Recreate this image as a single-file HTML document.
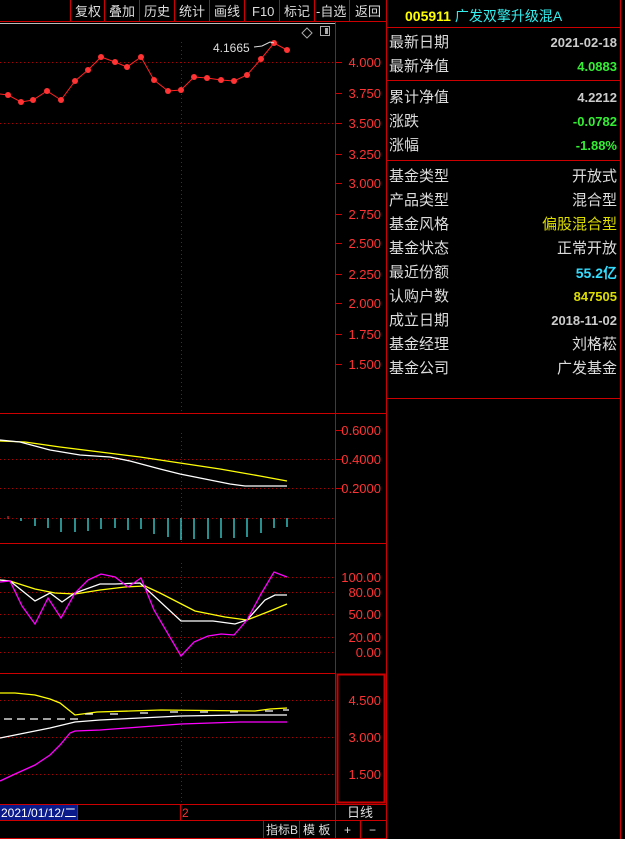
<!DOCTYPE html>
<html><head><meta charset="utf-8"><style>
body{margin:0;background:#fff;width:625px;height:849px;overflow:hidden;font-family:"Liberation Sans","Noto Sans CJK SC",sans-serif}
#w{position:absolute;left:0;top:0;width:625px;height:839px;background:#000}
.t{position:absolute;font-size:14px;white-space:nowrap}
</style></head><body><div id="w">
<svg width="625" height="839" style="position:absolute;left:0;top:0" font-family="Liberation Sans,Noto Sans CJK SC,sans-serif">
<!-- toolbar -->
<g stroke="#c00" stroke-width="1" fill="none">
<line x1="0" y1="21.5" x2="386" y2="21.5"/>
<line x1="70.5" y1="0" x2="70.5" y2="21"/><line x1="104.5" y1="0" x2="104.5" y2="21"/><line x1="139.5" y1="0" x2="139.5" y2="21"/><line x1="174.5" y1="0" x2="174.5" y2="21"/><line x1="209.5" y1="0" x2="209.5" y2="21"/><line x1="244.5" y1="0" x2="244.5" y2="21"/><line x1="279.5" y1="0" x2="279.5" y2="21"/><line x1="314.5" y1="0" x2="314.5" y2="21"/><line x1="349.5" y1="0" x2="349.5" y2="21"/>
<line x1="335.5" y1="22" x2="335.5" y2="820"/>
<line x1="386.5" y1="0" x2="386.5" y2="839"/>
<line x1="620.5" y1="0" x2="620.5" y2="839"/>
<line x1="0" y1="413.5" x2="386" y2="413.5"/>
<line x1="0" y1="543.5" x2="386" y2="543.5"/>
<line x1="0" y1="673.5" x2="335" y2="673.5"/>
<rect x="337.5" y="674.5" width="47" height="128" stroke-width="2"/>
<line x1="0" y1="804.5" x2="386" y2="804.5"/>
<line x1="0" y1="820.5" x2="386" y2="820.5"/>
<line x1="180.5" y1="804" x2="180.5" y2="820"/>
<line x1="263.5" y1="820" x2="263.5" y2="839"/><line x1="299.5" y1="820" x2="299.5" y2="839"/><line x1="335.5" y1="820" x2="335.5" y2="839"/><line x1="360.5" y1="820" x2="360.5" y2="839"/>
<line x1="0" y1="838.5" x2="386" y2="838.5"/>
<line x1="387" y1="27.5" x2="620" y2="27.5"/><line x1="387" y1="80.5" x2="620" y2="80.5"/><line x1="387" y1="160.5" x2="620" y2="160.5"/><line x1="387" y1="398.5" x2="620" y2="398.5"/>
</g>
<line x1="0" y1="23.5" x2="335" y2="23.5" stroke="#bbb"/>
<g fill="#ddd" font-size="13">
<text x="75" y="16">复权</text><text x="109" y="16">叠加</text><text x="144" y="16">历史</text><text x="179" y="16">统计</text><text x="214" y="16">画线</text><text x="252" y="16">F10</text><text x="284" y="16">标记</text><text x="316" y="16">-自选</text><text x="355" y="16">返回</text>
</g>
<!-- grid dotted -->
<g stroke="#a00" stroke-dasharray="1,3" fill="none">
<line x1="0" y1="62.5" x2="335" y2="62.5"/><line x1="0" y1="123.5" x2="335" y2="123.5"/>
<line x1="181.5" y1="42" x2="181.5" y2="413"/>
<line x1="0" y1="459.5" x2="335" y2="459.5"/><line x1="0" y1="488.5" x2="335" y2="488.5"/><line x1="0" y1="518.5" x2="335" y2="518.5"/>
<line x1="181.5" y1="433" x2="181.5" y2="543"/>
<line x1="0" y1="577.5" x2="335" y2="577.5"/><line x1="0" y1="592.5" x2="335" y2="592.5"/><line x1="0" y1="614.5" x2="335" y2="614.5"/><line x1="0" y1="637.5" x2="335" y2="637.5"/><line x1="0" y1="652.5" x2="335" y2="652.5"/>
<line x1="181.5" y1="563" x2="181.5" y2="673"/>
<line x1="0" y1="700.5" x2="335" y2="700.5"/><line x1="0" y1="737.5" x2="335" y2="737.5"/><line x1="0" y1="774.5" x2="335" y2="774.5"/>
<line x1="181.5" y1="693" x2="181.5" y2="804"/>
</g>
<!-- axis ticks/labels -->
<g stroke="#c00"><line x1="335" y1="62.5" x2="342" y2="62.5"/><line x1="335" y1="93.5" x2="342" y2="93.5"/><line x1="335" y1="123.5" x2="342" y2="123.5"/><line x1="335" y1="154.5" x2="342" y2="154.5"/><line x1="335" y1="183.5" x2="342" y2="183.5"/><line x1="335" y1="214.5" x2="342" y2="214.5"/><line x1="335" y1="243.5" x2="342" y2="243.5"/><line x1="335" y1="274.5" x2="342" y2="274.5"/><line x1="335" y1="303.5" x2="342" y2="303.5"/><line x1="335" y1="334.5" x2="342" y2="334.5"/><line x1="335" y1="364.5" x2="342" y2="364.5"/>
<line x1="335" y1="430.5" x2="342" y2="430.5"/><line x1="335" y1="459.5" x2="342" y2="459.5"/><line x1="335" y1="488.5" x2="342" y2="488.5"/></g>
<g fill="#f33" font-size="13" text-anchor="end">
<text x="381" y="67">4.000</text><text x="381" y="98">3.750</text><text x="381" y="128">3.500</text><text x="381" y="159">3.250</text><text x="381" y="188">3.000</text><text x="381" y="219">2.750</text><text x="381" y="248">2.500</text><text x="381" y="279">2.250</text><text x="381" y="308">2.000</text><text x="381" y="339">1.750</text><text x="381" y="369">1.500</text>
<text x="381" y="435">0.6000</text><text x="381" y="464">0.4000</text><text x="381" y="493">0.2000</text>
<text x="381" y="582">100.00</text><text x="381" y="597">80.00</text><text x="381" y="619">50.00</text><text x="381" y="642">20.00</text><text x="381" y="657">0.00</text>
<text x="381" y="705">4.500</text><text x="381" y="742">3.000</text><text x="381" y="779">1.500</text>
</g>
<!-- price -->
<polyline fill="none" stroke="#f22" points="0,94 8,95 21,102 33,100 47,91 61,100 75,81 88,70 101,57 115,62 127,67 141,57 154,80 168,91 181,90 194,77 207,78 221,80 234,81 247,75 261,59 274,43 287,50"/>
<g fill="#f33"><circle cx="8" cy="95" r="3"/><circle cx="21" cy="102" r="3"/><circle cx="33" cy="100" r="3"/><circle cx="47" cy="91" r="3"/><circle cx="61" cy="100" r="3"/><circle cx="75" cy="81" r="3"/><circle cx="88" cy="70" r="3"/><circle cx="101" cy="57" r="3"/><circle cx="115" cy="62" r="3"/><circle cx="127" cy="67" r="3"/><circle cx="141" cy="57" r="3"/><circle cx="154" cy="80" r="3"/><circle cx="168" cy="91" r="3"/><circle cx="181" cy="90" r="3"/><circle cx="194" cy="77" r="3"/><circle cx="207" cy="78" r="3"/><circle cx="221" cy="80" r="3"/><circle cx="234" cy="81" r="3"/><circle cx="247" cy="75" r="3"/><circle cx="261" cy="59" r="3"/><circle cx="274" cy="43" r="3"/><circle cx="287" cy="50" r="3"/></g>
<text x="213" y="52" fill="#ddd" font-size="12">4.1665</text>
<polyline fill="none" stroke="#ddd" points="254,47 262,46 270,42 274,43"/>
<path d="M307 28 l5 5 l-5 5 l-5 -5z" fill="none" stroke="#aaa"/>
<rect x="320.5" y="26.5" width="9" height="9" fill="none" stroke="#aaa"/><rect x="325" y="28" width="3" height="6" fill="#aaa"/>
<!-- MACD -->
<polyline fill="none" stroke="#ff0" stroke-width="1.3" points="0,441 25,442 60,447 100,452 140,457 180,463 220,469 260,476 287,481"/>
<polyline fill="none" stroke="#fff" stroke-width="1.3" points="0,440 20,442 50,450 80,455 110,457 130,461 160,469 180,474 200,478 230,484 245,486 270,486 287,486"/>
<g stroke="#4ee" stroke-width="1.2"><line x1="21" y1="518" x2="21" y2="521"/><line x1="35" y1="518" x2="35" y2="526"/><line x1="48" y1="518" x2="48" y2="528"/><line x1="61" y1="518" x2="61" y2="532"/><line x1="75" y1="518" x2="75" y2="532"/><line x1="88" y1="518" x2="88" y2="531"/><line x1="101" y1="518" x2="101" y2="529"/><line x1="115" y1="518" x2="115" y2="528"/><line x1="128" y1="518" x2="128" y2="530"/><line x1="141" y1="518" x2="141" y2="529"/><line x1="154" y1="518" x2="154" y2="534"/><line x1="168" y1="518" x2="168" y2="537"/><line x1="181" y1="518" x2="181" y2="540"/><line x1="194" y1="518" x2="194" y2="539"/><line x1="208" y1="518" x2="208" y2="539"/><line x1="221" y1="518" x2="221" y2="538"/><line x1="234" y1="518" x2="234" y2="538"/><line x1="247" y1="518" x2="247" y2="537"/><line x1="261" y1="518" x2="261" y2="533"/><line x1="274" y1="518" x2="274" y2="528"/><line x1="287" y1="518" x2="287" y2="527"/></g>
<line x1="8" y1="516" x2="8" y2="519" stroke="#f33"/>
<!-- KDJ -->
<polyline fill="none" stroke="#ff0" stroke-width="1.3" points="0,580 10,581 35,589 55,593 75,594 100,590 125,587 145,586 160,593 195,611 225,617 247,620 270,611 287,604"/>
<polyline fill="none" stroke="#fff" stroke-width="1.3" points="0,580 10,581 35,601 50,593 62,602 75,593 100,584 115,584 140,583 181,621 213,621 235,624 247,620 265,600 275,595 287,595"/>
<polyline fill="none" stroke="#f0f" stroke-width="1.3" points="0,582 10,581 22,606 35,624 48,598 61,618 75,593 88,580 101,574 115,577 128,587 141,578 154,610 181,656 194,642 208,636 221,634 234,635 247,620 261,594 274,572 287,577"/>
<!-- bottom -->
<polyline fill="none" stroke="#ff0" stroke-width="1.3" points="0,693 15,693 35,695 50,699 60,703 70,711 75,715 97,712 130,711 161,710 255,711 270,709 287,708"/>
<polyline fill="none" stroke="#fff" stroke-width="1.3" points="0,738 20,734 50,728 75,722 100,720 140,718 181,716 240,715 287,715"/>
<path d="M4 719h8M17 719h8M30 719h8M43 719h8M57 719h8M70 719h8M85 714h8M110 714h8M140 713h8M170 712h8M200 712h8M230 712h8M265 711h8M283 710h6" stroke="#fff" stroke-width="1.3"/>
<polyline fill="none" stroke="#f0f" stroke-width="1.3" points="0,781 15,774 35,765 50,755 60,745 70,733 75,731 100,730 140,727 181,724 240,722 287,722"/>
<!-- date row -->
<rect x="0" y="805" width="77" height="15" fill="#0a1a8a"/>
<text x="1" y="817" fill="#fff" font-size="12">2021/01/12/二</text>
<line x1="77.5" y1="805" x2="77.5" y2="820" stroke="#c00"/>
<text x="182" y="817" fill="#f33" font-size="12">2</text>
<text x="347" y="817" fill="#ddd" font-size="13">日线</text>
<g fill="#ddd" font-size="12"><text x="266" y="834">指标B</text><text x="303" y="834">模 板</text><text x="344" y="834">+</text><text x="369" y="834">−</text></g>
</svg>
<!-- right panel -->
<div class="t" style="left:405px;top:6px;font-size:14px"><b style="color:#ff0">005911</b> <span style="color:#3ee">广发双擎升级混A</span></div>
<div style="position:absolute;left:389px;top:31px;width:228px;font-size:15px;line-height:24px;color:#ddd">
<div style="display:flex;justify-content:space-between"><span>最新日期</span><b style="font-size:13px;color:#ccc">2021-02-18</b></div>
<div style="display:flex;justify-content:space-between"><span>最新净值</span><b style="font-size:13px;color:#3e3">4.0883</b></div>
<div style="height:7px"></div>
<div style="display:flex;justify-content:space-between"><span>累计净值</span><b style="font-size:13px;color:#ccc">4.2212</b></div>
<div style="display:flex;justify-content:space-between"><span>涨跌</span><b style="font-size:13px;color:#3e3">-0.0782</b></div>
<div style="display:flex;justify-content:space-between"><span>涨幅</span><b style="font-size:13px;color:#3e3">-1.88%</b></div>
<div style="height:7px"></div>
<div style="display:flex;justify-content:space-between"><span>基金类型</span><span>开放式</span></div>
<div style="display:flex;justify-content:space-between"><span>产品类型</span><span>混合型</span></div>
<div style="display:flex;justify-content:space-between"><span>基金风格</span><span style="color:#dd0">偏股混合型</span></div>
<div style="display:flex;justify-content:space-between"><span>基金状态</span><span>正常开放</span></div>
<div style="display:flex;justify-content:space-between"><span>最近份额</span><b style="color:#3df;font-size:14px">55.2亿</b></div>
<div style="display:flex;justify-content:space-between"><span>认购户数</span><b style="color:#dd0;font-size:13px">847505</b></div>
<div style="display:flex;justify-content:space-between"><span>成立日期</span><b style="font-size:13px;color:#ccc">2018-11-02</b></div>
<div style="display:flex;justify-content:space-between"><span>基金经理</span><span>刘格菘</span></div>
<div style="display:flex;justify-content:space-between"><span>基金公司</span><span>广发基金</span></div>
</div>
</div></body></html>
